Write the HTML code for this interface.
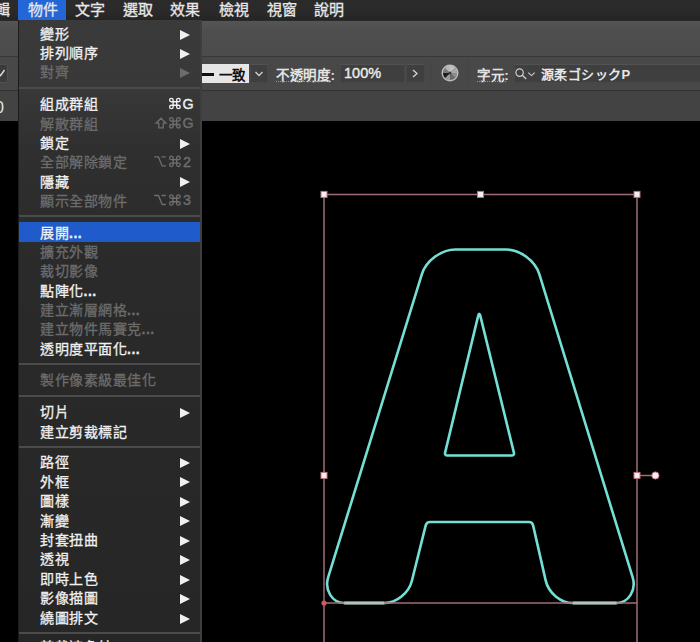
<!DOCTYPE html>
<html lang="zh-TW"><head><meta charset="utf-8">
<style>
*{margin:0;padding:0;box-sizing:border-box}
html,body{width:700px;height:642px;overflow:hidden;background:#000;font-family:"Liberation Sans",sans-serif;position:relative}
.abs{position:absolute}
#menubar{left:0;top:0;width:700px;height:20px;background:linear-gradient(#2b2b2b,#2a2a2a 60%,#242424)}
.mb{position:absolute;top:0;height:20px;line-height:20px;font-size:15px;font-weight:500;color:#e8e8e8;white-space:nowrap;-webkit-text-stroke:0.3px currentColor}
#tabs{left:0;top:20px;width:700px;height:36px;background:linear-gradient(#2a2a2a 0,#2a2a2a 1px,#545454 1.5px,#4e4e4e 12px,#4c4c4c)}
#l1{left:0;top:56px;width:700px;height:1px;background:#383838}
#ctrl{left:0;top:57px;width:700px;height:33px;background:#484848}
#l2{left:0;top:90px;width:700px;height:1px;background:#333333}
#bar3{left:0;top:91px;width:700px;height:30px;background:#434343}
#canvas{left:0;top:121px;width:700px;height:521px;background:#000}
#menu{left:18px;top:20px;width:184px;height:622px;border-left:1px solid #1c1c1c;border-right:2px solid #3e3e3e;
 background:linear-gradient(#3a3a3a 0px,#383838 70px,#2f2f2f 130px,#2a2a2a 250px,#262626 622px)}
.mi{position:absolute;left:40px;height:20px;font-size:14px;letter-spacing:0.5px;font-weight:500;color:#f0f0f0;white-space:nowrap;line-height:20px;-webkit-text-stroke:0.3px currentColor}
.mi b{font-weight:bold;letter-spacing:0.5px}
.mi.d{color:#6c6c6c}
.sc{position:absolute;left:100px;width:93.5px;text-align:right;height:20px;line-height:20px;font-size:15px;font-weight:normal;letter-spacing:0.5px;color:#f0f0f0;white-space:nowrap;-webkit-text-stroke:0.3px currentColor}
.sc.d{color:#6c6c6c}
.sep{position:absolute;left:19px;width:181px;height:2px;background:#4b4b4b}
.hl{position:absolute;left:19px;width:181px;height:20px;margin-top:1px;background:#1f5bcb}
.tri{position:absolute;left:180px;width:0;height:0;border-top:5.5px solid transparent;border-bottom:5.5px solid transparent;border-left:10px solid #f0f0f0}
.tri.d{border-left-color:#6c6c6c}
.fld{position:absolute;top:64px;height:19px;background:#3f3f3f;border:1px solid #474747;border-top-color:#525252}
.lbl{position:absolute;top:66px;height:19px;line-height:19px;font-size:13.5px;font-weight:bold;letter-spacing:0.6px;color:#e4e4e4;white-space:nowrap}
.ul{position:absolute;top:81px;height:1px;border-top:1px dotted #9a9a9a}
.vs{position:absolute;top:60px;width:1px;height:26px;background:#444}

</style></head><body>
<div id="canvas" class="abs"></div>
<div id="tabs" class="abs"></div>
<div id="l1" class="abs"></div>
<div id="ctrl" class="abs"></div>
<div id="l2" class="abs"></div>
<div id="bar3" class="abs"></div>
<svg class="abs" style="left:0;top:0" width="700" height="642" viewBox="0 0 700 642">
<g fill="none" stroke-linejoin="round">
<path d="M455.5 249.5 L505.7 249.5 C520.0 249.5 535.1 260.7 539.4 274.3 L632.6 577.2 C636.6 590.1 628.6 603.0 616.6 603.0 L572.8 603.0 C560.7 603.0 548.5 592.9 545.7 580.6 L533.1 525.4 C532.7 523.5 530.8 522.0 528.9 522.0 L430.1 522.0 C428.1 522.0 426.2 523.5 425.7 525.4 L411.9 580.7 C408.8 593.0 396.4 603.0 384.3 603.0 L344.2 603.0 C332.2 603.0 324.2 590.1 328.2 577.2 L421.8 274.3 C426.0 260.7 441.2 249.5 455.5 249.5 Z" stroke="#74e0d4" stroke-width="2.6"/>
<path d="M480.2 315.4 L513.9 452.6 C514.3 454.3 513.4 455.5 511.6 455.5 L447.4 455.5 C445.6 455.5 444.7 454.3 445.1 452.6 L478.3 315.4 C478.8 313.1 479.6 313.1 480.2 315.4 Z" stroke="#74e0d4" stroke-width="2.6"/>
<path d="M324 194.4 H637 M324 194.4 V642 M637 194.4 V642 M324 603 H637 M640 475.4 H652" stroke="#a06e78" stroke-width="1.5"/>
<path d="M344.2 603.0 L384.3 603.0 M572.8 603.0 L616.6 603.0" stroke="#b8c0bc" stroke-width="2.8"/>
</g>
<g fill="#f4f0f0" stroke="#c07080" stroke-width="1">
<rect x="321" y="191.4" width="6" height="6"/>
<rect x="477.5" y="191.4" width="6" height="6"/>
<rect x="634" y="191.4" width="6" height="6"/>
<rect x="321" y="472.4" width="6" height="6"/>
<rect x="634" y="472.4" width="6" height="6"/>
<circle cx="655.4" cy="475.5" r="3.6"/>
</g>
<circle cx="324" cy="603" r="2.6" fill="#d05860"/>
</svg>

<!-- left partial controls -->
<div class="abs" style="left:-10px;top:64px;width:18px;height:19px;border-radius:3px;background:#3b3b3b;border:1px solid #505050"></div>
<svg class="abs" style="left:0;top:64px" width="8" height="19"><path d="M-2 9 L0.5 11.5 L4.5 6" stroke="#d8d8d8" stroke-width="1.5" fill="none"/></svg>
<div class="abs" style="left:-5px;top:98.5px;height:18px;line-height:18px;font-size:16px;color:#e8e8e8">0</div>

<!-- control bar -->
<div class="abs" style="left:202px;top:64px;width:47px;height:19px;background:#e6e6e6"></div>
<div class="abs" style="left:202px;top:73px;width:12px;height:2.5px;background:#111"></div>
<div class="abs" style="left:218.5px;top:65.5px;height:19px;line-height:19px;font-size:13.5px;font-weight:bold;color:#111;white-space:nowrap">一致</div>
<div class="fld" style="left:250px;width:18px"></div>
<svg class="abs" style="left:250px;top:64px" width="18" height="19"><path d="M5.5 8 L9 11.5 L12.5 8" stroke="#d0d0d0" stroke-width="1.3" fill="none"/></svg>
<div class="lbl" style="left:276px">不透明度:</div>
<div class="ul" style="left:276px;width:55px"></div>
<div class="fld" style="left:340px;width:65px"></div>
<div class="abs" style="left:344px;top:64px;height:19px;line-height:19px;font-size:14.5px;color:#ececec;-webkit-text-stroke:0.4px #ececec">100%</div>
<div class="fld" style="left:406px;width:19px"></div>
<svg class="abs" style="left:406px;top:64px" width="19" height="19"><path d="M7 6 L11 9.5 L7 13" stroke="#d0d0d0" stroke-width="1.4" fill="none"/></svg>
<div class="vs" style="left:430px"></div>
<svg class="abs" style="left:440px;top:63px" width="20" height="20">
 <path d="M10 10 L10.00 2.80 A7.2 7.2 0 0 1 15.09 4.91 Z" fill="#c4c4c4"/>
 <path d="M10 10 L15.09 4.91 A7.2 7.2 0 0 1 17.20 10.00 Z" fill="#a8a8a8"/>
 <path d="M10 10 L17.20 10.00 A7.2 7.2 0 0 1 15.09 15.09 Z" fill="#8c8c8c"/>
 <path d="M10 10 L15.09 15.09 A7.2 7.2 0 0 1 10.00 17.20 Z" fill="#6a6a6a"/>
 <path d="M10 10 L10.00 17.20 A7.2 7.2 0 0 1 4.91 15.09 Z" fill="#9a9a9a"/>
 <path d="M10 10 L4.91 15.09 A7.2 7.2 0 0 1 2.80 10.00 Z" fill="#1c1c1c"/>
 <path d="M10 10 L2.80 10.00 A7.2 7.2 0 0 1 4.91 4.91 Z" fill="#7a7a7a"/>
 <path d="M10 10 L4.91 4.91 A7.2 7.2 0 0 1 10.00 2.80 Z" fill="#b8b8b8"/>
 <circle cx="10" cy="10" r="7.8" fill="none" stroke="#bdbdbd" stroke-width="1.4"/>
 <circle cx="10" cy="10" r="1.5" fill="#3a3a3a"/>
</svg>
<div class="vs" style="left:468px"></div>
<div class="lbl" style="left:477px">字元:</div>
<div class="ul" style="left:477px;width:29px"></div>
<div class="fld" style="left:514px;width:200px"></div>
<svg class="abs" style="left:514px;top:64px" width="24" height="19"><circle cx="5.6" cy="8.6" r="3.7" stroke="#cfcfcf" stroke-width="1.2" fill="none"/><path d="M8.3 11.3 L12.2 15" stroke="#cfcfcf" stroke-width="1.3"/><path d="M14.3 8.6 L17.5 11.6 L20.7 8.6" stroke="#cfcfcf" stroke-width="1.1" fill="none"/></svg>
<div class="abs" style="left:541px;top:64.5px;height:19px;line-height:19px;font-size:13px;font-weight:bold;letter-spacing:0.4px;color:#e8e8e8;white-space:nowrap">源柔ゴシックP</div>

<div id="menubar" class="abs">
  <div class="abs" style="left:18px;top:0;width:48px;height:20px;background:#2266d8"></div>
  <div class="mb" style="left:-5px">輯</div>
  <div class="mb" style="left:28px">物件</div>
  <div class="mb" style="left:75px">文字</div>
  <div class="mb" style="left:123px">選取</div>
  <div class="mb" style="left:170px">效果</div>
  <div class="mb" style="left:219px">檢視</div>
  <div class="mb" style="left:267px">視窗</div>
  <div class="mb" style="left:314px">說明</div>
</div>

<div id="menu" class="abs"></div>
<div class="mi" style="top:23.80px">變形</div>
<div class="tri" style="top:29.50px"></div>
<div class="mi" style="top:43.10px">排列順序</div>
<div class="tri" style="top:48.80px"></div>
<div class="mi d" style="top:62.40px">對齊</div>
<div class="tri d" style="top:68.10px"></div>
<div class="sep" style="top:86.60px"></div>
<div class="mi" style="top:94.30px">組成群組</div>
<div class="mi d" style="top:113.60px">解散群組</div>
<div class="mi" style="top:132.90px">鎖定</div>
<div class="tri" style="top:138.60px"></div>
<div class="mi d" style="top:152.20px">全部解除鎖定</div>
<div class="mi" style="top:171.50px">隱藏</div>
<div class="tri" style="top:177.20px"></div>
<div class="mi d" style="top:190.80px">顯示全部物件</div>
<div class="sep" style="top:215.00px"></div>
<div class="hl" style="top:221.40px"></div>
<div class="mi" style="top:222.70px">展開<b>...</b></div>
<div class="mi d" style="top:242.00px">擴充外觀</div>
<div class="mi d" style="top:261.30px">裁切影像</div>
<div class="mi" style="top:280.60px">點陣化<b>...</b></div>
<div class="mi d" style="top:299.90px">建立漸層網格<b>...</b></div>
<div class="mi d" style="top:319.20px">建立物件馬賽克<b>...</b></div>
<div class="mi" style="top:338.50px">透明度平面化<b>...</b></div>
<div class="sep" style="top:362.70px"></div>
<div class="mi d" style="top:370.40px">製作像素級最佳化</div>
<div class="sep" style="top:394.60px"></div>
<div class="mi" style="top:402.30px">切片</div>
<div class="tri" style="top:408.00px"></div>
<div class="mi" style="top:421.60px">建立剪裁標記</div>
<div class="sep" style="top:445.80px"></div>
<div class="mi" style="top:452.20px">路徑</div>
<div class="tri" style="top:457.90px"></div>
<div class="mi" style="top:471.65px">外框</div>
<div class="tri" style="top:477.35px"></div>
<div class="mi" style="top:491.10px">圖樣</div>
<div class="tri" style="top:496.80px"></div>
<div class="mi" style="top:510.55px">漸變</div>
<div class="tri" style="top:516.25px"></div>
<div class="mi" style="top:530.00px">封套扭曲</div>
<div class="tri" style="top:535.70px"></div>
<div class="mi" style="top:549.45px">透視</div>
<div class="tri" style="top:555.15px"></div>
<div class="mi" style="top:568.90px">即時上色</div>
<div class="tri" style="top:574.60px"></div>
<div class="mi" style="top:588.35px">影像描圖</div>
<div class="tri" style="top:594.05px"></div>
<div class="mi" style="top:607.80px">繞圖排文</div>
<div class="tri" style="top:613.50px"></div>
<div class="sep" style="top:632.15px"></div>
<div class="mi" style="top:636.85px">剪裁遮色片</div>
<div class="tri" style="top:642.55px"></div>
<svg class="abs" style="left:0;top:0" width="700" height="642"><path transform="translate(169.6 98.30) scale(0.8833 0.8667)" d="M4 2V10A2 2 0 1 1 2 8H10A2 2 0 1 1 8 10V2A2 2 0 1 1 10 4H2A2 2 0 1 1 4 2Z" fill="none" stroke="#f0f0f0" stroke-width="1.528"/>
<text x="182.6" y="108.70" font-size="14.3" fill="#f0f0f0" stroke="#f0f0f0" stroke-width="0.35" font-family="Liberation Sans">G</text>
<path transform="translate(169.6 117.60) scale(0.8833 0.8667)" d="M4 2V10A2 2 0 1 1 2 8H10A2 2 0 1 1 8 10V2A2 2 0 1 1 10 4H2A2 2 0 1 1 4 2Z" fill="none" stroke="#6e6e6e" stroke-width="1.528"/>
<path transform="translate(155.6 117.60)" d="M5.4 0.6 L10.4 5.6 H7.6 V10.2 H3.2 V5.6 H0.4 Z" fill="none" stroke="#6e6e6e" stroke-width="1.3" stroke-linejoin="miter"/>
<text x="182.6" y="128.00" font-size="14.3" fill="#6e6e6e" stroke="#6e6e6e" stroke-width="0.35" font-family="Liberation Sans">G</text>
<path transform="translate(169.6 156.20) scale(0.8833 0.8667)" d="M4 2V10A2 2 0 1 1 2 8H10A2 2 0 1 1 8 10V2A2 2 0 1 1 10 4H2A2 2 0 1 1 4 2Z" fill="none" stroke="#6e6e6e" stroke-width="1.528"/>
<path transform="translate(154.2 156.20)" d="M0 0.7 H4.2 L8 9.7 H11.6 M7.3 0.7 H11.6" fill="none" stroke="#6e6e6e" stroke-width="1.3"/>
<text x="182.9" y="166.60" font-size="14.3" fill="#6e6e6e" stroke="#6e6e6e" stroke-width="0.35" font-family="Liberation Sans">2</text>
<path transform="translate(169.6 194.80) scale(0.8833 0.8667)" d="M4 2V10A2 2 0 1 1 2 8H10A2 2 0 1 1 8 10V2A2 2 0 1 1 10 4H2A2 2 0 1 1 4 2Z" fill="none" stroke="#6e6e6e" stroke-width="1.528"/>
<path transform="translate(154.2 194.80)" d="M0 0.7 H4.2 L8 9.7 H11.6 M7.3 0.7 H11.6" fill="none" stroke="#6e6e6e" stroke-width="1.3"/>
<text x="182.9" y="205.20" font-size="14.3" fill="#6e6e6e" stroke="#6e6e6e" stroke-width="0.35" font-family="Liberation Sans">3</text></svg>

</body></html>
